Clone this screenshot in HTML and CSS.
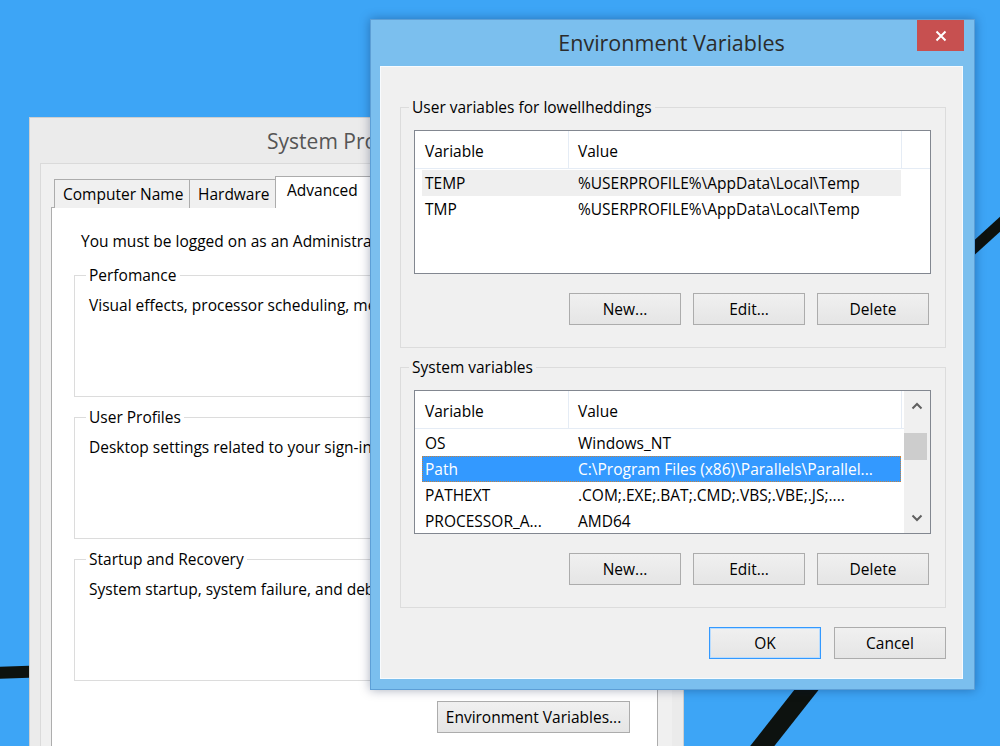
FILE: index.html
```html
<!DOCTYPE html>
<html lang="en">
<head>
<meta charset="utf-8">
<title>Environment Variables</title>
<link rel="stylesheet" href="styles.css">
</head>
<body>
<div class="desktop">
  <svg class="wallpaper" width="1000" height="746" viewBox="0 0 1000 746" aria-hidden="true">
    <g stroke="#0d120f" fill="none">
      <line x1="-10" y1="673" x2="80" y2="670" stroke-width="12"/>
      <line x1="930" y1="288" x2="1020" y2="206" stroke-width="11"/>
      <line x1="741" y1="773" x2="830" y2="660" stroke-width="19"/>
    </g>
  </svg>

  <div class="win sysprop">
    <div class="sp-titlebar">System Properties</div>
    <div class="sp-client">
      <div class="tabs">
        <div class="tab w1">Computer Name</div>
        <div class="tab w2">Hardware</div>
        <div class="tab active">Advanced</div>
      </div>
      <div class="panel">
        <p class="intro">You must be logged on as an Administrator to make most of these changes.</p>
        <fieldset class="sp-group">
          <legend>Perfomance</legend>
          <p class="sp-text">Visual effects, processor scheduling, memory usage, and virtual memory</p>
        </fieldset>
        <fieldset class="sp-group">
          <legend>User Profiles</legend>
          <p class="sp-text">Desktop settings related to your sign-in</p>
        </fieldset>
        <fieldset class="sp-group">
          <legend>Startup and Recovery</legend>
          <p class="sp-text">System startup, system failure, and debugging information</p>
        </fieldset>
        <div class="env-row">
          <button class="btn env-btn">Environment Variables...</button>
        </div>
      </div>
    </div>
  </div>

  <div class="win envwin">
    <div class="ev-titlebar">
      <span class="ev-title">Environment Variables</span>
      <button class="close" aria-label="Close">
        <svg width="12" height="12" viewBox="0 0 12 12"><path d="M1.5 1.5 L10.5 10.5 M10.5 1.5 L1.5 10.5" stroke="#fff" stroke-width="2" fill="none"/></svg>
      </button>
    </div>
    <div class="ev-client">
      <fieldset class="ev-group">
        <legend>User variables for lowellheddings</legend>
        <div class="group-body">
          <div class="listview">
            <div class="lv-main">
              <div class="lv-header">
                <div class="hcell c1">Variable</div>
                <div class="hcell c2">Value</div>
                <div class="hcell c3"></div>
              </div>
              <div class="lv-rows">
                <div class="row inactive-sel"><span class="cell n">TEMP</span><span class="cell v">%USERPROFILE%\AppData\Local\Temp</span></div>
                <div class="row"><span class="cell n">TMP</span><span class="cell v">%USERPROFILE%\AppData\Local\Temp</span></div>
              </div>
            </div>
          </div>
          <div class="btn-row">
            <button class="btn">New...</button>
            <button class="btn">Edit...</button>
            <button class="btn">Delete</button>
          </div>
        </div>
      </fieldset>

      <fieldset class="ev-group second">
        <legend>System variables</legend>
        <div class="group-body">
          <div class="listview">
            <div class="lv-main">
              <div class="lv-header">
                <div class="hcell c1">Variable</div>
                <div class="hcell c2">Value</div>
                <div class="hcell c3"></div>
              </div>
              <div class="lv-rows">
                <div class="row"><span class="cell n">OS</span><span class="cell v">Windows_NT</span></div>
                <div class="row selected"><span class="cell n">Path</span><span class="cell v">C:\Program Files (x86)\Parallels\Parallel...</span></div>
                <div class="row"><span class="cell n">PATHEXT</span><span class="cell v">.COM;.EXE;.BAT;.CMD;.VBS;.VBE;.JS;....</span></div>
                <div class="row"><span class="cell n">PROCESSOR_A...</span><span class="cell v">AMD64</span></div>
              </div>
            </div>
            <div class="scrollbar">
              <div class="sb-arrow">
                <svg width="12" height="8" viewBox="0 0 12 8"><path d="M1.5 6.5 L6 2 L10.5 6.5" stroke="#606060" stroke-width="2" fill="none"/></svg>
              </div>
              <div class="sb-track"><div class="sb-thumb"></div></div>
              <div class="sb-arrow">
                <svg width="12" height="8" viewBox="0 0 12 8"><path d="M1.5 1.5 L6 6 L10.5 1.5" stroke="#606060" stroke-width="2" fill="none"/></svg>
              </div>
            </div>
          </div>
          <div class="btn-row">
            <button class="btn">New...</button>
            <button class="btn">Edit...</button>
            <button class="btn">Delete</button>
          </div>
        </div>
      </fieldset>

      <div class="dlg-buttons">
        <button class="btn default">OK</button>
        <button class="btn">Cancel</button>
      </div>
    </div>
  </div>
</div>
</body>
</html>
```

FILE: styles.css
```css
html, body {
  margin: 0;
  padding: 0;
  height: 100%;
  overflow: hidden;
}
body {
  font-family: "Open Sans", "Noto Sans", "DejaVu Sans", sans-serif;
  font-size: 15.5px;
  color: #000;
}
.desktop {
  position: relative;
  width: 1000px;
  height: 746px;
  background: #3da5f6;
  overflow: hidden;
}
.wallpaper {
  position: absolute;
  left: 0;
  top: 0;
}
.win {
  position: absolute;
  box-sizing: border-box;
  display: flex;
  flex-direction: column;
}
.btn {
  box-sizing: border-box;
  width: 112px;
  height: 32px;
  padding: 0;
  border: 1px solid #acacac;
  background: linear-gradient(#f0f0f0, #e5e5e5);
  font: inherit;
  color: #000;
  white-space: nowrap;
}

/* ---------- System Properties (inactive, behind) ---------- */
.sysprop {
  z-index: 1;
  left: 29px;
  top: 117px;
  width: 655px;
  height: 720px;
  background: #ebebeb;
  border: 1px solid #cfcfcf;
  padding: 0 11px 11px 10px;
}
.sp-titlebar {
  height: 45px;
  display: flex;
  align-items: center;
  justify-content: center;
  font-size: 21px;
  color: #555;
}
.sp-client {
  flex: 1;
  display: flex;
  flex-direction: column;
  background: #f0f0f0;
  padding: 13px 14px 0 11px;
  box-shadow: inset 1px 1px 0 #dadada;
}
.tabs {
  display: flex;
  align-items: flex-end;
  padding-left: 3px;
  height: 32px;
  margin-bottom: -1px;
  position: relative;
}
.tab {
  box-sizing: border-box;
  height: 29px;
  padding: 0 8px;
  display: flex;
  align-items: center;
  border: 1px solid #acacac;
  border-bottom: none;
  background: #f0f0f0;
  white-space: nowrap;
  margin-right: -1px;
}
.tab.w1 { width: 136px; }
.tab.w2 { width: 87px; }
.tab.active {
  width: 110px;
  height: 32px;
  background: #fff;
  padding: 2px 11px 0;
  align-items: flex-start;
  position: relative;
}
.panel {
  flex: 1;
  background: #fff;
  border: 1px solid #adadad;
  padding: 23px 27px 0 22px;
  display: flex;
  flex-direction: column;
  white-space: nowrap;
  overflow: hidden;
}
.intro {
  margin: 0 0 14px 7px;
  line-height: 20px;
}
.sp-group {
  margin: 0 0 10px 0;
  padding: 0;
  height: 132px;
  box-sizing: border-box;
  border: 1px solid #dcdcdc;
  min-width: 0;
}
.sp-group legend {
  margin-left: 11px;
  padding: 0 3px;
  line-height: 20px;
}
.sp-text {
  margin: 10px 0 0 14px;
  line-height: 20px;
}
.env-row {
  display: flex;
  justify-content: flex-end;
  margin-top: 10px;
}
.env-btn {
  width: 193px;
  height: 32px;
}

/* ---------- Environment Variables (active) ---------- */
.envwin {
  z-index: 2;
  left: 370px;
  top: 19px;
  width: 605px;
  height: 671px;
  background: #7bbfee;
  border: 1px solid #5d9fd6;
  padding: 0 11px 10px 9px;
  box-shadow: 0 0 10px rgba(0, 20, 60, 0.35);
}
.ev-titlebar {
  height: 46px;
  display: grid;
  grid-template-columns: 1fr auto 1fr;
  align-items: start;
}
.ev-title {
  grid-column: 2;
  align-self: center;
  font-size: 21.5px;
  color: #2b2b2b;
  margin-top: -2px;
}
.close {
  grid-column: 3;
  justify-self: end;
  width: 47px;
  height: 31px;
  margin-right: -1px;
  border: none;
  padding: 0;
  background: #c75050;
  display: flex;
  align-items: center;
  justify-content: center;
}
.ev-client {
  flex: 1;
  display: flex;
  flex-direction: column;
  background: #f0f0f0;
  padding: 31px 17px 0 20px;
  box-shadow: inset 0 0 0 1px #f8fbfe;
}
.ev-group {
  margin: 0;
  padding: 0;
  border: 1px solid #dcdcdc;
  min-width: 0;
}
.ev-group.second {
  margin-top: 9px;
}
.ev-group legend {
  margin-left: 8px;
  padding: 0 3px;
  line-height: 20px;
}
.group-body {
  padding: 13px 14px 22px 13px;
}
.listview {
  box-sizing: border-box;
  height: 144px;
  border: 1px solid #828790;
  background: #fff;
  display: flex;
  overflow: hidden;
}
.lv-main {
  flex: 1;
  display: flex;
  flex-direction: column;
  min-width: 0;
}
.lv-header {
  display: flex;
  height: 37px;
  border-bottom: 1px solid #e5ecf5;
  flex-shrink: 0;
}
.hcell {
  display: flex;
  align-items: center;
  box-sizing: border-box;
  border-right: 1px solid #e5ecf5;
  white-space: nowrap;
  padding-top: 2px;
}
.hcell.c1 { width: 154px; padding-left: 10px; }
.hcell.c2 { width: 333px; padding-left: 9px; }
.hcell.c3 { flex: 1; border-right: none; }
.lv-rows {
  padding-top: 1px;
}
.row {
  display: flex;
  align-items: center;
  height: 26px;
  width: 479px;
  margin-left: 7px;
  box-sizing: border-box;
  white-space: nowrap;
}
.row.inactive-sel { background: #efefef; }
.row.selected {
  background: #3399ff;
  color: #fff;
  outline: 1px dotted #c3833f;
  outline-offset: -1px;
}
.cell.n { width: 153px; padding-left: 3px; box-sizing: border-box; overflow: hidden; }
.cell.v { padding-left: 3px; }
.scrollbar {
  width: 26px;
  display: flex;
  flex-direction: column;
  background: #f0f0f0;
  flex-shrink: 0;
}
.sb-arrow {
  height: 30px;
  display: flex;
  align-items: center;
  justify-content: center;
}
.sb-track {
  flex: 1;
}
.sb-thumb {
  margin: 12px 3px 0 0;
  height: 27px;
  background: #cdcdcd;
}
.btn-row {
  display: flex;
  justify-content: flex-end;
  gap: 12px;
  margin-top: 19px;
  margin-right: 2px;
}
.dlg-buttons {
  display: flex;
  justify-content: flex-end;
  gap: 13px;
  margin-top: 19px;
}
.btn.default {
  border-color: #3399ff;
  box-shadow: inset 0 0 0 1px #b8dcff;
}
```
